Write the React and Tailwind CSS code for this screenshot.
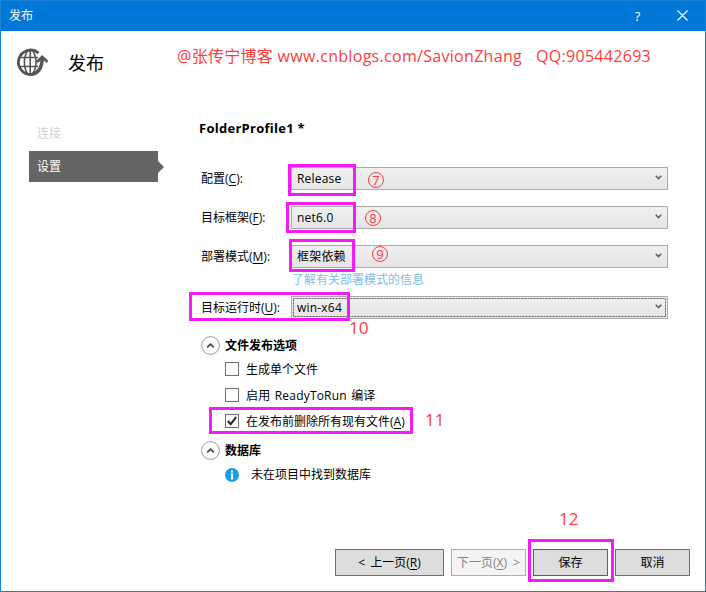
import { Fragment } from 'react'

const fields = [
  { label: '配置', hotkey: 'C', value: 'Release', row: 'mt-0' },
  { label: '目标框架', hotkey: 'F', value: 'net6.0', row: 'mt-4' },
  { label: '部署模式', hotkey: 'M', value: '框架依赖', row: 'mt-4', link: '了解有关部署模式的信息' },
  { label: '目标运行时', hotkey: 'U', value: 'win-x64', row: 'mt-0', focused: true },
]

const options = [
  { label: '生成单个文件' },
  { label: '启用 ReadyToRun 编译', spacing: 'tracking-[0.2px] [word-spacing:1px]' },
  { label: '在发布前删除所有现有文件', hotkey: 'A', checked: true },
]

// Boxes and step numbers drawn on top of the dialog
const marks = [
  'left-[288px] top-[164px] w-[68px] h-8',
  'left-[286px] top-[202px] w-[70px] h-[31px]',
  'left-[289px] top-[239px] w-[66px] h-[33px]',
  'left-[189px] top-[292px] w-[161px] h-[29px]',
  'left-[209px] top-[407px] w-[204px] h-[27px]',
  'left-[528px] top-[539px] w-[86px] h-[43px]',
]

const circled = [
  { n: '7', pos: 'left-[368px] top-[172px]' },
  { n: '8', pos: 'left-[365px] top-[210px]' },
  { n: '9', pos: 'left-[372px] top-[246px]' },
]

const steps = [
  { n: '10', pos: 'left-[349px] top-[318px]' },
  { n: '11', pos: 'left-[425px] top-[410px]' },
  { n: '12', pos: 'left-[559px] top-[509px]' },
]

function Hotkey({ children }) {
  return <>(<span className="underline underline-offset-2">{children}</span>)</>
}

function PublishIcon() {
  return (
    <svg width="34" height="30" viewBox="0 0 34 30" fill="none" stroke="#555558" className="shrink-0">
      <path d="M23.6 6A12.2 12.2 0 1 0 17.5 27.3" strokeWidth="2.8" />
      <path d="M15.2 3v24M3.5 10.5h19.5M3.5 19.5h19.5" strokeWidth="1.6" />
      <path d="M13 3c-4.8 7-4.8 17.5 0 24.5M17.4 3c4.8 7 4.8 17.5 0 24.5" strokeWidth="1.6" />
      <path d="M17 27.4c7-1.6 10.2-7.4 10.2-16.4" strokeWidth="3.4" />
      <path d="M22 15l5.2-5.2 5.3 5.2" strokeWidth="2.7" />
    </svg>
  )
}

function Select({ value, focused }) {
  return (
    <div className="relative flex h-[23px] w-[377px] items-center justify-between border border-[#acacac] bg-linear-to-b from-[#f0f0f0] to-[#e5e5e5] px-[5px]">
      <span className="tracking-[0.2px]">{value}</span>
      <svg width="7" height="5" viewBox="0 0 7 5" fill="none" stroke="#606060" strokeWidth="1.5" className="mb-0.5">
        <path d="M.7 .8l2.8 2.8L6.3 .8" />
      </svg>
      {focused && (
        <svg className="absolute left-px top-px" width="373" height="19" fill="none" stroke="#606060">
          <rect x=".5" y=".5" width="372" height="18" strokeDasharray="2 1" />
        </svg>
      )}
    </div>
  )
}

function Section({ title }) {
  return (
    <div className="flex h-[19px] items-center gap-[5px] font-bold">
      <svg width="19" height="19" viewBox="0 0 19 19" fill="none">
        <circle cx="9.5" cy="9.5" r="8.9" stroke="#999" />
        <path d="M6.2 11.3l3.3-3.1 3.3 3.1" stroke="#444" strokeWidth="1.8" />
      </svg>
      <span>{title}</span>
    </div>
  )
}

export default function App() {
  return (
    <div className="relative flex h-[592px] w-[706px] flex-col overflow-hidden border border-[#1883d7] bg-white font-['Open_Sans','Noto_Sans_CJK_SC',sans-serif] text-xs leading-4 text-black">
      <header className="flex h-[30px] shrink-0 items-center bg-[#0078d7] pl-2 text-white">
        <span className="flex-1">发布</span>
        <span className="w-[45px] text-center text-[13px]">?</span>
        <svg width="11" height="11" viewBox="0 0 11 11" stroke="white" strokeWidth="1.1" className="mx-[17px] -mt-px">
          <path d="M.5 .5l10 10M10.5 .5l-10 10" />
        </svg>
      </header>

      <div className="flex h-[86px] shrink-0 pt-4 pl-[14px]">
        <PublishIcon />
        <h1 className="mt-1 ml-[19px] w-[109px] text-lg leading-6">发布</h1>
        <p className="-mt-[3px] text-base leading-6 tracking-[0.3px] whitespace-pre text-[#ff3c3c]">
          <span>@张传宁博客 www.cnblogs.com/SavionZhang</span>
          <span className="ml-[14px]">QQ:905442693</span>
        </p>
      </div>

      <main className="flex flex-1">
        <nav className="w-[171px] shrink-0 pl-7">
          <div className="h-[34px] pt-[9px] pl-2 text-[#d0d0d0]">连接</div>
          <div className="flex items-center">
            <div className="flex h-[31px] w-[129px] items-center bg-[#656565] pl-2 text-white">设置</div>
            <svg width="6" height="12" viewBox="0 0 6 12" fill="#656565">
              <path d="M0 0l6 6-6 6z" />
            </svg>
          </div>
        </nav>

        <section className="ml-[27px] w-[470px]">
          <h2 className="mt-[3px] mb-[31px] text-[13px] leading-4 font-bold tracking-[0.27px]">FolderProfile1 *</h2>
          {fields.map((f) => (
            <Fragment key={f.hotkey}>
              <div className={`flex items-center ${f.row}`}>
                <label className="w-[92px] pl-0.5">
                  {f.label}<Hotkey>{f.hotkey}</Hotkey>:
                </label>
                <Select value={f.value} focused={f.focused} />
              </div>
              {f.link && <div className="mb-1 h-6 pt-1 pl-[93px] text-[#7dbde8]">{f.link}</div>}
            </Fragment>
          ))}

          <div className="mt-[17px] pl-0.5">
            <Section title="文件发布选项" />
            <div className="mt-[7px] flex flex-col gap-3 pl-6">
              {options.map((o) => (
                <div key={o.label} className="flex h-[14px] items-center gap-[7px]">
                  <span className="flex size-[14px] items-center justify-center border border-[#707070] bg-white">
                    {o.checked && (
                      <svg width="10" height="10" viewBox="0 0 10 10" fill="none" stroke="#212121" strokeWidth="2">
                        <path d="M.8 5l2.9 3.2L9.2 1" />
                      </svg>
                    )}
                  </span>
                  <span className={`mt-0.5 ${o.spacing ?? ''}`}>
                    {o.label}{o.hotkey && <Hotkey>{o.hotkey}</Hotkey>}
                  </span>
                </div>
              ))}
            </div>
            <div className="h-[13px]" />
            <Section title="数据库" />
            <div className="mt-[7px] flex items-center gap-3 pl-6">
              <svg width="14" height="14" viewBox="0 0 14 14">
                <circle cx="7" cy="7" r="7" fill="#1ba1e2" />
                <path d="M6 2.5h2v2H6zM6 5.5h2v6H6z" fill="white" />
              </svg>
              <span>未在项目中找到数据库</span>
            </div>
          </div>
        </section>
      </main>

      <footer className="mr-[15px] mb-[15px] flex h-[27px] shrink-0 justify-end gap-[7px]">
        <button className="w-[109px] border border-[#707070] bg-[#ddd] [word-spacing:2px]">&lt; 上一页<Hotkey>R</Hotkey></button>
        <button className="flex w-[75px] items-center justify-center border border-[#adadad] bg-[#f4f4f4] whitespace-nowrap text-[#838383] [word-spacing:3px]">
          <span>下一页<Hotkey>X</Hotkey> &gt;</span>
        </button>
        <button className="w-[75px] border border-[#0078d7] bg-[#ddd]">保存</button>
        <button className="w-[75px] border border-[#707070] bg-[#ddd]">取消</button>
      </footer>

      <div className="pointer-events-none absolute -top-px -left-px text-[#ff3c3c]">
        {marks.map((m) => (
          <div key={m} className={`absolute border-3 border-[#f61af6] ${m}`} />
        ))}
        {circled.map((c) => (
          <span key={c.n} className={`absolute flex size-4 items-center justify-center rounded-full border border-[#ff3c3c] text-[13px] leading-none ${c.pos}`}>
            {c.n}
          </span>
        ))}
        {steps.map((s) => (
          <span key={s.n} className={`absolute text-[17px] leading-5 ${s.pos}`}>{s.n}</span>
        ))}
      </div>
    </div>
  )
}
